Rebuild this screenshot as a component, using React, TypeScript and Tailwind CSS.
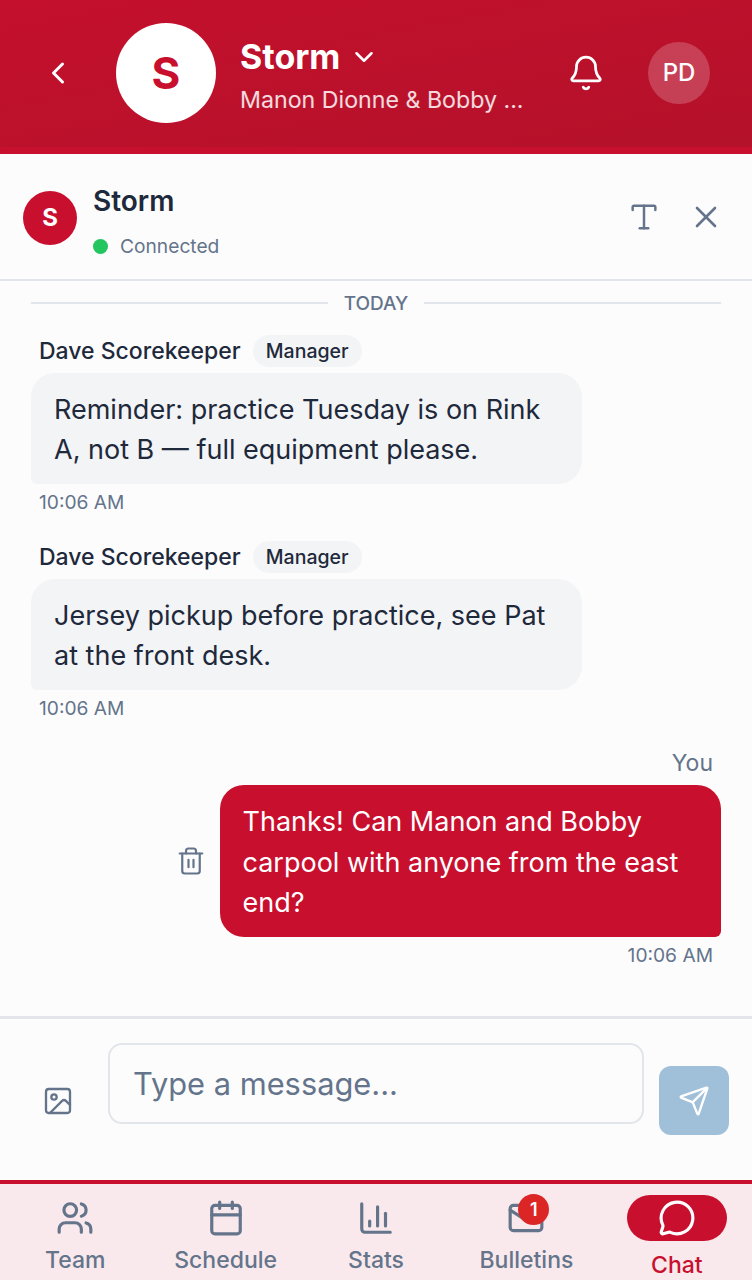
import {
  Bell,
  Calendar,
  ChartColumn,
  ChevronDown,
  ChevronLeft,
  Image,
  Mail,
  MessageCircle,
  Send,
  Trash2,
  Type,
  Users,
  X,
} from "lucide-react";

function Message({ text }: { text: string[] }) {
  return (
    <div className="flex flex-col">
      <div className="flex items-center h-[32px] pl-[8px]">
        <span className="text-[23px] font-medium text-[#1e293b] leading-none">Dave Scorekeeper</span>
        <span className="ml-[12px] h-[32px] w-[109px] pt-[1px] rounded-full bg-[#f3f4f6] flex items-center justify-center text-[19.5px] font-medium text-[#1e293b]">
          Manager
        </span>
      </div>
      <div className="mt-[6px] w-[551px] h-[111px] bg-[#f3f4f6] rounded-[24px] rounded-bl-[6px] px-[23px] pt-[17px] text-[27px] leading-[40px] text-[#1e293b]">
        {text.map((line) => (
          <div key={line}>{line}</div>
        ))}
      </div>
      <div className="pl-[8px] mt-[6px] text-[19.2px] leading-[24px] text-[#64748b]">10:06 AM</div>
    </div>
  );
}

function NavItem({ label, icon }: { label: string; icon: React.ReactNode }) {
  return (
    <div className="flex-1 flex flex-col items-center">
      <div className="h-[46px] flex items-center justify-center text-[#64748b] relative">{icon}</div>
      <span className="mt-[5px] text-[23px] leading-[28px] font-medium text-[#64748b]">{label}</span>
    </div>
  );
}

export default function App() {
  return (
    <div className="w-[752px] h-[1280px] overflow-hidden flex flex-col bg-[#fcfcfd] font-['Inter',sans-serif]">
      <header className="h-[154px] shrink-0 border-b-[7px] pb-[1px] border-[#c6102e] flex items-center bg-gradient-to-br from-[#c4102d] to-[#b4112a] text-white">
        <ChevronLeft className="ml-[40px] w-[36px] h-[36px]" strokeWidth={2} />
        <div className="ml-[40px] w-[100px] h-[100px] rounded-full bg-white flex items-center justify-center text-[#c8102e] text-[44px] font-bold">
          S
        </div>
        <div className="ml-[24px] w-[300px]">
          <div className="flex items-center h-[44px] pt-[9px]">
            <span className="text-[34px] font-bold leading-none">Storm</span>
            <ChevronDown className="ml-[9px] w-[30px] h-[30px]" strokeWidth={2} />
          </div>
          <div className="mt-[9px] text-[23.2px] leading-[32px] text-white/85">Manon Dionne &amp; Bobby ...</div>
        </div>
        <Bell className="ml-[27px] w-[38px] h-[38px]" strokeWidth={1.75} />
        <div className="ml-[43px] w-[62px] h-[62px] rounded-full bg-white/20 flex items-center justify-center text-[24px] font-medium">
          PD
        </div>
      </header>

      <div className="h-[127px] shrink-0 border-b-2 border-[#e2e5ea] flex items-center pl-[23px]">
        <div className="mt-[2px] w-[54px] h-[54px] rounded-full bg-[#c8102e] flex items-center justify-center text-white text-[24px] font-bold">
          S
        </div>
        <div className="ml-[16px] flex-1 mt-[14px]">
          <div className="text-[28px] leading-[34px] font-semibold text-[#1e293b] mt-[-4px]">Storm</div>
          <div className="mt-[15px] flex items-center">
            <span className="w-[15px] h-[15px] rounded-full bg-[#22c55e]" />
            <span className="ml-[12px] text-[19.2px] leading-[26px] text-[#64748b]">Connected</span>
          </div>
        </div>
        <Type className="w-[34px] h-[34px] text-[#64748b]" strokeWidth={1.75} />
        <X className="ml-[27px] mr-[28px] w-[36px] h-[36px] text-[#64748b]" strokeWidth={1.75} />
      </div>

      <div className="flex-1 px-[31px]">
        <div className="h-[44px] pt-[2px] flex items-center">
          <div className="flex-1 h-[2px] bg-[#e2e5ea] -mt-[2px]" />
          <span className="mx-[16px] text-[19px] font-medium text-[#64748b]">TODAY</span>
          <div className="flex-1 h-[2px] bg-[#e2e5ea] -mt-[2px]" />
        </div>
        <div className="mt-[10px]">
          <Message text={["Reminder: practice Tuesday is on Rink", "A, not B — full equipment please."]} />
        </div>
        <div className="mt-[27px]">
          <Message text={["Jersey pickup before practice, see Pat", "at the front desk."]} />
        </div>
        <div className="mt-[28px] flex flex-col items-end">
          <div className="pr-[8px] text-[23px] leading-[30px] text-[#64748b]">You</div>
          <div className="mt-[7px] flex items-center">
            <Trash2 className="mr-[14px] w-[30px] h-[30px] text-[#64748b]" strokeWidth={1.75} />
            <div className="w-[501px] h-[152px] bg-[#c8102e] rounded-[24px] rounded-br-[6px] pl-[22.5px] pt-[17px] text-[27px] leading-[40.5px] text-white">
              <div>Thanks! Can Manon and Bobby</div>
              <div>carpool with anyone from the east</div>
              <div>end?</div>
            </div>
          </div>
          <div className="pr-[8px] mt-[6px] text-[19.2px] leading-[24px] text-[#64748b]">10:06 AM</div>
        </div>
      </div>

      <div className="h-[164px] shrink-0 border-t-[3px] border-[#e2e5ea] flex items-end pb-[45px]">
        <Image className="ml-[42px] mb-[18px] w-[32px] h-[32px] text-[#64748b]" strokeWidth={1.75} />
        <div className="ml-[34px] w-[536px] h-[81px] mb-[11px] border-2 border-[#e2e5ea] rounded-[14px] pl-[23px] pt-[19px] text-[30.8px] leading-[40px] text-[#64748b]">
          Type a message...
        </div>
        <div className="ml-[15px] w-[70px] h-[69px] rounded-[12px] bg-[#a0bfd9] flex items-center justify-center text-white">
          <Send className="w-[32px] h-[32px]" strokeWidth={1.75} />
        </div>
      </div>

      <nav className="h-[100px] shrink-0 border-t-4 border-[#c8102e] bg-[#f9e9ec] flex pt-[11px]">
        <NavItem label="Team" icon={<Users className="w-[38px] h-[38px]" strokeWidth={2} />} />
        <NavItem label="Schedule" icon={<Calendar className="w-[38px] h-[38px]" strokeWidth={2} />} />
        <NavItem label="Stats" icon={<ChartColumn className="w-[38px] h-[38px]" strokeWidth={2} />} />
        <NavItem
          label="Bulletins"
          icon={
            <>
              <Mail className="w-[38px] h-[38px]" strokeWidth={2} />
              <span className="absolute -top-[1px] left-[11px] w-[31px] h-[31px] rounded-full bg-[#dc2626] flex items-center justify-center text-white text-[18px] font-semibold">
                1
              </span>
            </>
          }
        />
        <div className="flex-1 flex flex-col items-center">
          <div className="w-[100px] h-[46px] rounded-full bg-[#c8102e] flex items-center justify-center text-white">
            <MessageCircle className="w-[38px] h-[38px]" strokeWidth={2} />
          </div>
          <span className="mt-[10px] text-[23px] leading-[28px] font-medium text-[#c8102e]">Chat</span>
        </div>
      </nav>
    </div>
  );
}
